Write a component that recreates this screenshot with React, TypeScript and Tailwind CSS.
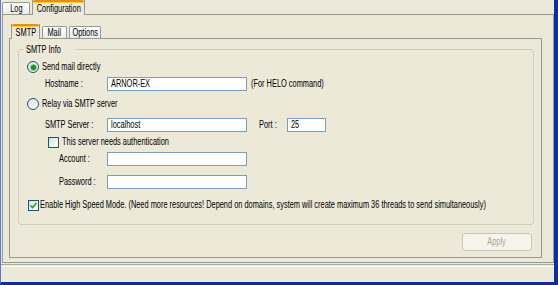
import React from "react";

// the screenshot's text is narrow (Tahoma squeezed), so each label is squeezed horizontally
function T({ children, center }: { children: React.ReactNode; center?: boolean }) {
	return (
		<span
			className={`inline-block whitespace-nowrap scale-x-[0.74] ${center ? "origin-center" : "origin-left"}`}
		>
			{children}
		</span>
	);
}

function Radio({ checked }: { checked?: boolean }) {
	return (
		<span className="flex h-[12px] w-[12px] shrink-0 items-center justify-center rounded-full border border-[#1C5180] bg-linear-to-br from-[#DCDCD7] to-white">
			{checked && <span className="h-[5px] w-[5px] rounded-full bg-[#1E8E1E] shadow-[0_0_0_1px_#8FD08F]" />}
		</span>
	);
}

function Check({ checked }: { checked?: boolean }) {
	return (
		<span className="flex h-[11px] w-[11px] shrink-0 items-center justify-center border border-[#1C5180] bg-linear-to-br from-[#DCDCD7] to-white">
			{checked && (
				<svg width="9" height="9" viewBox="0 0 9 9">
					<path d="M1.5 4.5 L3.5 6.5 L7.5 2" stroke="#21A121" strokeWidth="1.6" fill="none" />
				</svg>
			)}
		</span>
	);
}

function Field({ value, w }: { value?: string; w: string }) {
	return (
		<div className={`flex h-[14px] shrink-0 items-center overflow-hidden border border-[#7F9DB9] bg-white px-[3px] text-black ${w}`}>
			{value && <T>{value}</T>}
		</div>
	);
}

function Tab({ label, selected, w }: { label: string; selected?: boolean; w: string }) {
	if (selected) {
		return (
			<div className={`relative z-10 -mb-px flex h-[15px] flex-col border-x border-[#919B9C] bg-[#ECE9D8] ${w}`}>
				<div className="h-[2px] rounded-t-[2px] bg-[#E68B2C]" />
				<div className="h-[1px] bg-[#FFC73C]" />
				<div className="flex flex-1 items-center justify-center pb-[1px]">
					<T center>{label}</T>
				</div>
			</div>
		);
	}
	return (
		<div
			className={`flex h-[12px] items-center justify-center rounded-t-[2px] border-x border-t border-[#919B9C] bg-linear-to-b from-white to-[#ECEBE6] ${w}`}
		>
			<T center>{label}</T>
		</div>
	);
}

export default function App() {
	return (
		<div className="flex h-[285px] w-[558px] flex-col overflow-hidden border-b-[3px] border-l border-r-[4px] border-[#0B2F9E] border-l-[#5A78D0] bg-[#ECE9D8] font-['Liberation_Sans',Arial,sans-serif] text-[10px] leading-none text-black">
			{/* top tabs */}
			<div className="ml-[1px] mt-[1px] flex h-[13px] items-end gap-[2px]">
				<Tab label="Log" w="w-[28px]" />
				<Tab label="Configuration" w="w-[53px]" selected />
			</div>

			{/* outer panel */}
			<div className="ml-[1px] flex h-[249px] w-[552px] flex-col border border-[#919B9C] bg-[#ECE9D8] pl-[6px] pt-[9px]">
				{/* inner tabs */}
				<div className="ml-[2px] flex h-[14px] items-end gap-[2px]">
					<Tab label="SMTP" w="w-[29px]" selected />
					<Tab label="Mail" w="w-[25px]" />
					<Tab label="Options" w="w-[32px]" />
				</div>

				{/* inner panel */}
				<div className="flex h-[220px] w-[533px] flex-col border border-[#919B9C] bg-[#ECE9D8] pl-[8px] pt-[10px]">
					<div className="relative flex h-[176px] w-[516px] flex-col rounded-[3px] border border-[#D0D0BF] pl-[8px]">
						<div className="absolute left-[5px] top-[-6px] bg-[#ECE9D8] px-[2px] leading-[11px]">
							<T>SMTP Info</T>
						</div>

						<div className="mt-[10px] flex h-[14px] items-center gap-[3px]">
							<Radio checked />
							<T>Send mail directly</T>
						</div>

						<div className="mt-[3px] flex h-[14px] items-center">
							<span className="ml-[18px] w-[62px]">
								<T>Hostname :</T>
							</span>
							<Field value="ARNOR-EX" w="w-[140px]" />
							<span className="ml-[4px]">
								<T>(For HELO command)</T>
							</span>
						</div>

						<div className="mt-[6px] flex h-[14px] items-center gap-[3px]">
							<Radio />
							<T>Relay via SMTP server</T>
						</div>

						<div className="mt-[7px] flex h-[14px] items-center">
							<span className="ml-[18px] w-[62px]">
								<T>SMTP Server :</T>
							</span>
							<Field value="localhost" w="w-[140px]" />
							<span className="ml-[12px] w-[28px]">
								<T>Port :</T>
							</span>
							<Field value="25" w="w-[39px]" />
						</div>

						<div className="mt-[3px] flex h-[14px] items-center gap-[3px] pl-[21px]">
							<Check />
							<T>This server needs authentication</T>
						</div>

						<div className="mt-[3px] flex h-[14px] items-center">
							<span className="ml-[32px] w-[48px]">
								<T>Account :</T>
							</span>
							<Field w="w-[140px]" />
						</div>

						<div className="mt-[9px] flex h-[14px] items-center">
							<span className="ml-[32px] w-[48px]">
								<T>Password :</T>
							</span>
							<Field w="w-[140px]" />
						</div>

						<div className="mt-[9px] flex h-[14px] items-center gap-[1px] pl-[1px]">
							<Check checked />
							<T>
								Enable High Speed Mode. (Need more resources! Depend on domains, system will create maximum 36
								threads to send simultaneously)
							</T>
						</div>
					</div>

					<div className="mr-[9px] mt-[8px] flex justify-end">
						<button className="flex h-[18px] w-[70px] items-center justify-center rounded-[3px] border border-[#C9C7BA] bg-[#F5F4EA] text-[#ACA899]">
							<T center>Apply</T>
						</button>
					</div>
				</div>
			</div>

			{/* status separator */}
			<div className="mt-[1px] h-[1px] bg-[#ACA899]" />
			<div className="mt-[1px] h-[1px] bg-white" />
			<div className="flex-1" />
		</div>
	);
}
